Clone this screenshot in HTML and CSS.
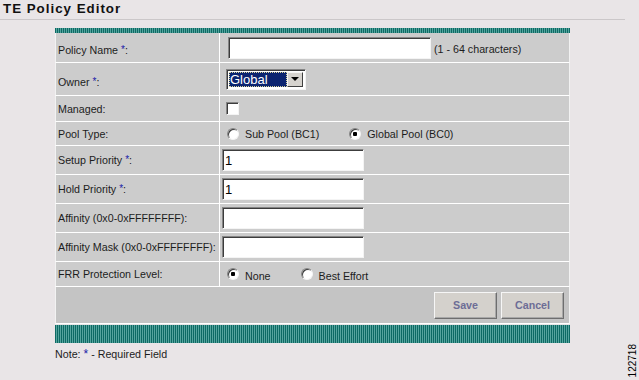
FILE: index.html
```html
<!DOCTYPE html>
<html lang="en">
<head>
  <meta charset="UTF-8">
  <meta name="viewport" content="width=device-width, initial-scale=1.0">
  <title>TE Policy Editor</title>
  <link rel="stylesheet" href="styles.css">
</head>
<body>
  <div class="page-title">TE Policy Editor</div>

  <form class="editor" action="#" method="POST">
    <div class="stripe stripe-top"></div>

    <div class="row row-name">
      <label class="label label-low" for="policyName">Policy Name <span class="req">*</span>:</label>
      <div class="field field-name">
        <input type="text" id="policyName" class="text-input text-input-long">
        <span class="hint">(1 - 64 characters)</span>
      </div>
    </div>

    <div class="row row-owner">
      <label class="label label-low">Owner <span class="req">*</span>:</label>
      <div class="field field-owner">
        <div class="select">
          <span class="select-value"><span class="select-text">Global</span></span>
          <span class="select-btn"><span class="select-arrow"></span></span>
        </div>
      </div>
    </div>

    <div class="row row-managed">
      <label class="label" for="managed">Managed:</label>
      <div class="field field-owner">
        <input type="checkbox" id="managed" class="check">
      </div>
    </div>

    <div class="row row-pool">
      <label class="label">Pool Type:</label>
      <div class="field field-radio">
        <label class="option"><input type="radio" name="pool" class="radio">Sub Pool (BC1)</label>
        <label class="option"><input type="radio" name="pool" class="radio" checked>Global Pool (BC0)</label>
      </div>
    </div>

    <div class="row">
      <label class="label" for="setupPriority">Setup Priority <span class="req">*</span>:</label>
      <div class="field">
        <input type="text" id="setupPriority" class="text-input" value="1">
      </div>
    </div>

    <div class="row">
      <label class="label" for="holdPriority">Hold Priority <span class="req">*</span>:</label>
      <div class="field">
        <input type="text" id="holdPriority" class="text-input" value="1">
      </div>
    </div>

    <div class="row">
      <label class="label" for="affinity">Affinity (0x0-0xFFFFFFFF):</label>
      <div class="field">
        <input type="text" id="affinity" class="text-input">
      </div>
    </div>

    <div class="row">
      <label class="label" for="affinityMask">Affinity Mask (0x0-0xFFFFFFFF):</label>
      <div class="field">
        <input type="text" id="affinityMask" class="text-input">
      </div>
    </div>

    <div class="row row-frr">
      <label class="label">FRR Protection Level:</label>
      <div class="field field-radio">
        <label class="option"><input type="radio" name="frr" class="radio" checked>None</label>
        <label class="option"><input type="radio" name="frr" class="radio">Best Effort</label>
      </div>
    </div>

    <div class="actions">
      <button type="submit" class="btn">Save</button>
      <button type="button" class="btn">Cancel</button>
    </div>

    <div class="stripe stripe-bottom"></div>
  </form>

  <div class="note">Note: <span class="note-req">*</span> - Required Field</div>

  <div class="fig-id">122718</div>
</body>
</html>
```

FILE: styles.css
```css
body {
  margin: 0;
  background: #e9e5e7;
  font-family: "Liberation Sans", Arial, sans-serif;
  font-size: 10.7px;
  color: #1c1c1c;
  position: relative;
  min-height: 380px;
}
.page-title {
  width: 625px;
  height: 20px;
  padding: 1px 0 0 3px;
  box-sizing: border-box;
  border-bottom: 1px solid #cbc7c9;
  font-size: 13.33px;
  line-height: 15px;
  font-weight: bold;
  letter-spacing: 1px;
  color: #111;
}
.editor {
  width: 515px;
  margin: 8px 0 0 55px;
}
.stripe {
  background: repeating-linear-gradient(90deg, #0d6a64 0 1px, #56a49e 1px 2px);
}
.stripe-top {
  height: 5px;
}
.stripe-bottom {
  height: 18px;
  margin-top: 1px;
}
.row {
  display: grid;
  grid-template-columns: 164px 1fr;
  height: 29px;
  box-sizing: border-box;
  background: #cccccc;
  border-left: 1px solid #f2f2f2;
  border-right: 1px solid #f2f2f2;
  border-bottom: 1px solid #fff;
}
.row-name {
  height: 30px;
}
.row-owner {
  height: 33px;
}
.row-managed {
  height: 26px;
}
.row-pool {
  height: 24px;
}
.row-frr {
  height: 25px;
}
.label {
  display: flex;
  align-items: center;
  padding-left: 2px;
  border-right: 1px solid #fff;
  white-space: nowrap;
}
.label-low {
  padding-top: 5px;
}
.req {
  color: #1a1aa8;
  font-size: 10px;
  vertical-align: 7px;
  line-height: 0;
  margin-left: 3px;
}
.field {
  display: flex;
  align-items: center;
  padding-left: 2px;
}
.field-name {
  padding-left: 8px;
}
.field-owner {
  padding-left: 6px;
}
.field-radio {
  padding-left: 7px;
  gap: 30px;
}
.text-input {
  width: 142px;
  height: 22px;
  box-sizing: border-box;
  margin: 0;
  padding: 0 2px;
  border: 1px solid;
  border-color: #858585 #f4f4f4 #f4f4f4 #858585;
  box-shadow: inset 1px 1px 0 #3c3c3c;
  background: #fff;
  font-family: "Liberation Sans", Arial, sans-serif;
  font-size: 13px;
  color: #000;
  outline: none;
}
.text-input-long {
  width: 203px;
}
.hint {
  margin-left: 3px;
  margin-top: 3px;
}
.select {
  display: flex;
  width: 80px;
  height: 21px;
  box-sizing: border-box;
  padding: 2px;
  border: 1px solid;
  border-color: #858585 #f4f4f4 #f4f4f4 #858585;
  box-shadow: inset 1px 1px 0 #3c3c3c;
  background: #fff;
}
.select-value {
  flex: 1;
  display: flex;
  align-items: center;
  background: #0b2470;
  outline: 1px dotted #d8d49a;
  outline-offset: -1px;
}
.select-text {
  color: #fff;
  font-size: 13px;
  padding-left: 1px;
}
.select-btn {
  width: 16px;
  display: flex;
  align-items: center;
  justify-content: center;
  box-sizing: border-box;
  background: #d6d3ce;
  border: 1px solid;
  border-color: #f4f4f4 #404040 #404040 #f4f4f4;
}
.select-arrow {
  width: 0;
  height: 0;
  border-left: 4px solid transparent;
  border-right: 4px solid transparent;
  border-top: 4px solid #000;
}
.check {
  appearance: none;
  width: 13px;
  height: 13px;
  margin: 0;
  background: #fff;
  border: 1px solid;
  border-color: #858585 #f4f4f4 #f4f4f4 #858585;
  box-shadow: inset 1px 1px 0 #3c3c3c;
}
.option {
  display: flex;
  align-items: center;
  gap: 6px;
  white-space: nowrap;
}
.radio {
  appearance: none;
  width: 12px;
  height: 12px;
  margin: 0;
  border-radius: 50%;
  background: #fff;
  border: 1px solid;
  border-color: #858585 #f4f4f4 #f4f4f4 #858585;
  box-shadow: inset 1px 1px 0 #3c3c3c;
}
.radio:checked {
  background: radial-gradient(circle at 50% 50%, #000 0 2px, #fff 2.5px);
}
.row-frr .option {
  padding-top: 3px;
}
.row-frr .radio {
  margin-top: -3px;
}
.actions {
  display: flex;
  justify-content: flex-end;
  align-items: center;
  gap: 4px;
  height: 37px;
  box-sizing: border-box;
  padding-right: 5px;
  background: #c4c4c4;
  border-left: 1px solid #f2f2f2;
  border-right: 1px solid #f2f2f2;
  border-bottom: 1px solid #fff;
}
.btn {
  width: 63px;
  height: 27px;
  margin: 0;
  padding: 0;
  background: #d4d1cc;
  border: 1px solid;
  border-color: #f6f6f6 #6e6e6e #6e6e6e #f6f6f6;
  box-shadow: inset -1px -1px 0 #a8a8a8;
  font-family: "Liberation Sans", Arial, sans-serif;
  font-size: 10.7px;
  font-weight: bold;
  color: #6d6d96;
}
.note {
  margin: 4px 0 0 55px;
}
.note-req {
  color: #1a1aa8;
  font-size: 12px;
}
.fig-id {
  position: absolute;
  left: 627px;
  top: 344px;
  writing-mode: vertical-rl;
  transform: rotate(180deg);
  font-size: 10px;
  color: #000;
}
```
